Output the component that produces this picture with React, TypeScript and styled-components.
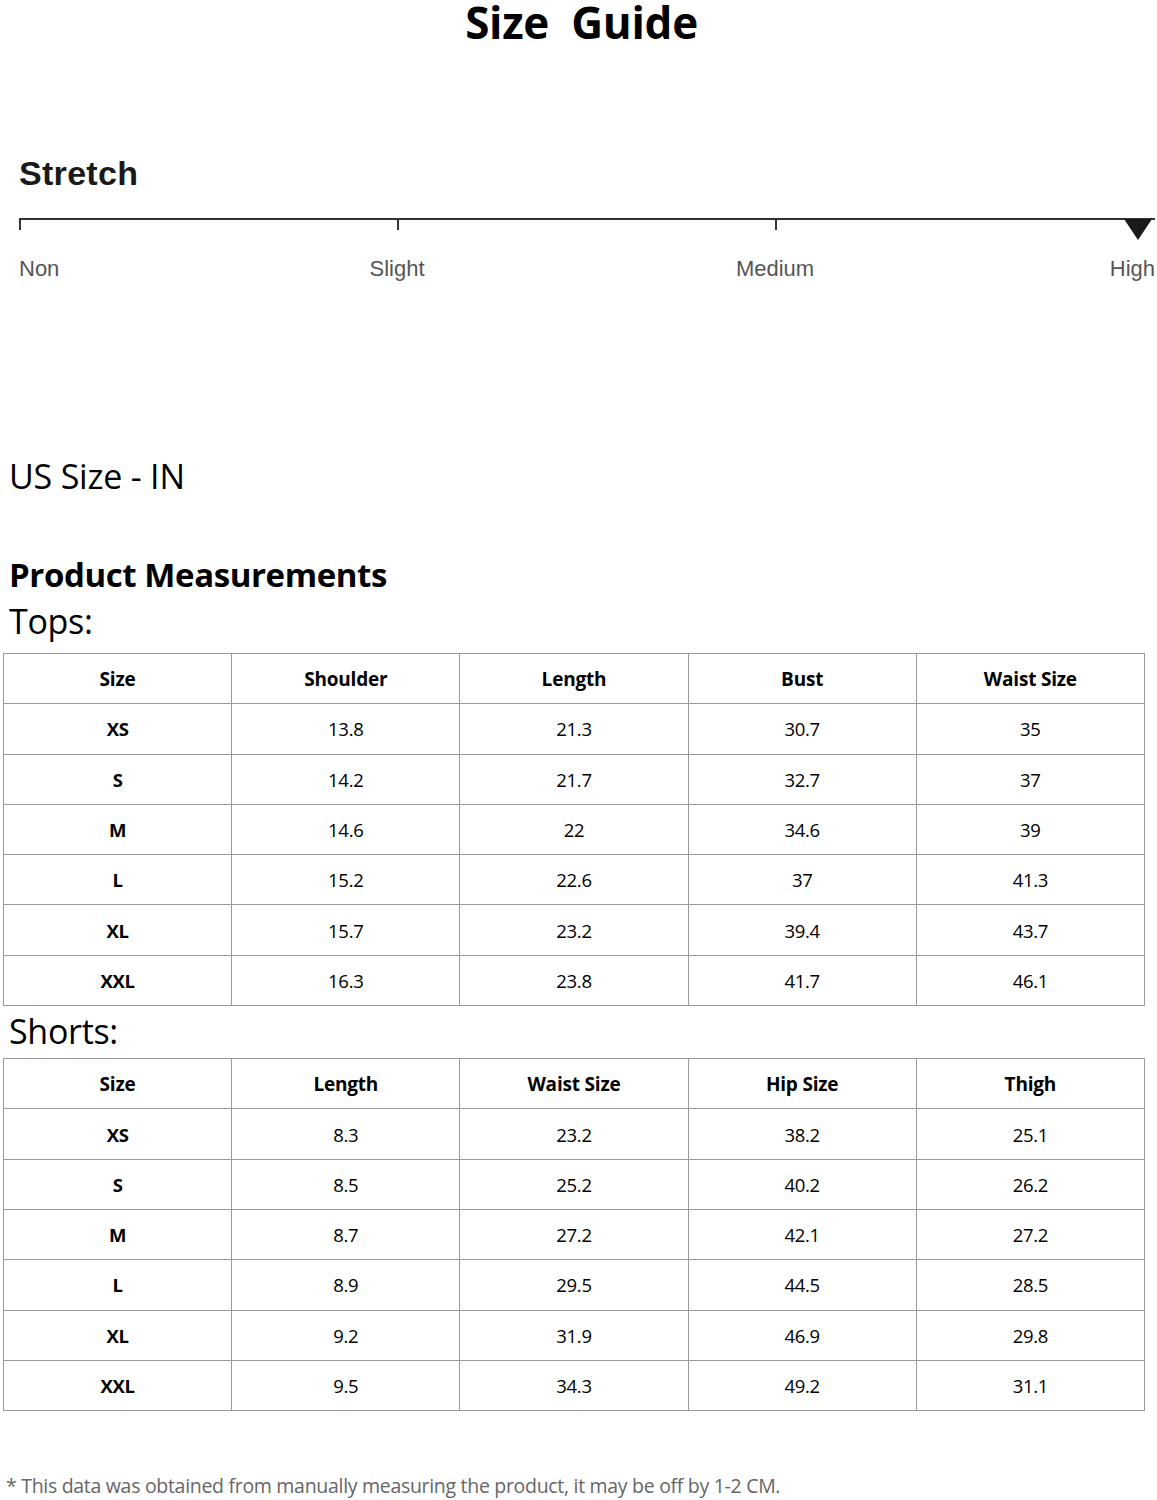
import React from "react";
import styled, { createGlobalStyle } from "styled-components";

const Global = createGlobalStyle`
  html, body { margin: 0; padding: 0; background: #fff; }
  body { font-family: "Open Sans", "Noto Sans", sans-serif; color: #000; }
`;

const Page = styled.div`
  width: 1157px;
  height: 1500px;
  box-sizing: border-box;
  display: flex;
  flex-direction: column;
  overflow: hidden;
`;

const Title = styled.h1`
  margin: 0;
  height: 48px;
  font-family: "Open Sans", sans-serif;
  font-weight: 700;
  font-size: 44px;
  line-height: 44px;
  text-align: center;
  white-space: pre;
  letter-spacing: -0.3px;
  padding-left: 6px;
`;

const StretchBlock = styled.section`
  margin-top: 103px;
  padding-left: 19px;
  padding-right: 2px;
  font-family: "Liberation Sans", Arial, sans-serif;
`;

const StretchTitle = styled.h2`
  margin: 0;
  font-size: 34px;
  font-weight: 700;
  line-height: 44px;
  color: #1a1a1a;
  letter-spacing: 0.3px;
`;

const Scale = styled.div`
  margin-top: 23px;
  display: grid;
  grid-template-columns: 378px 378px 1fr;
  position: relative;
`;

const Segment = styled.div`
  border-top: 2px solid #333;
  display: flex;
  flex-direction: column;
`;

const Tick = styled.div`
  width: 2px;
  height: 10px;
  background: #333;
`;

const Labels = styled.div`
  display: flex;
  justify-content: space-between;
  margin-top: 26px;
`;

const ScaleLabel = styled.span<{ $center?: boolean }>`
  font-size: 22px;
  line-height: 26px;
  color: #555;
  transform: ${(p) => (p.$center ? "translateX(-50%)" : "none")};
`;

const Marker = styled.svg`
  position: absolute;
  right: 2px;
  top: 1px;
`;

const UsSize = styled.div`
  margin-top: 172px;
  padding-left: 9px;
  font-size: 34px;
  line-height: 44px;
  letter-spacing: -0.2px;
`;

const SectionTitle = styled.h3`
  margin: 56px 0 0;
  padding-left: 9px;
  font-size: 33px;
  font-weight: 700;
  line-height: 42px;
  letter-spacing: -0.4px;
`;

const TableLabel = styled.div<{ $h: number }>`
  padding-left: 9px;
  font-size: 34px;
  height: ${(p) => p.$h}px;
  line-height: 50px;
  letter-spacing: -0.3px;
`;

const Table = styled.table`
  margin-left: 3px;
  width: 1142px;
  border-collapse: collapse;
  table-layout: fixed;
`;

const Th = styled.th`
  border: 1px solid #9a9a9a;
  height: 49.3px;
  padding: 0;
  font-size: 19px;
  font-weight: 700;
  text-align: center;
  letter-spacing: -0.2px;
`;

const Td = styled.td<{ $bold?: boolean }>`
  border: 1px solid #9a9a9a;
  height: 49.3px;
  padding: 0;
  font-size: 18.5px;
  font-weight: ${(p) => (p.$bold ? 700 : 400)};
  text-align: center;
  letter-spacing: -0.3px;
`;

const Footnote = styled.div`
  margin-top: 62px;
  padding-left: 6px;
  font-size: 19.5px;
  line-height: 26px;
  color: #666;
  letter-spacing: -0.3px;
`;

type Row = [string, string, string, string, string];

const topsHead: Row = ["Size", "Shoulder", "Length", "Bust", "Waist Size"];
const topsRows: Row[] = [
  ["XS", "13.8", "21.3", "30.7", "35"],
  ["S", "14.2", "21.7", "32.7", "37"],
  ["M", "14.6", "22", "34.6", "39"],
  ["L", "15.2", "22.6", "37", "41.3"],
  ["XL", "15.7", "23.2", "39.4", "43.7"],
  ["XXL", "16.3", "23.8", "41.7", "46.1"],
];

const shortsHead: Row = ["Size", "Length", "Waist Size", "Hip Size", "Thigh"];
const shortsRows: Row[] = [
  ["XS", "8.3", "23.2", "38.2", "25.1"],
  ["S", "8.5", "25.2", "40.2", "26.2"],
  ["M", "8.7", "27.2", "42.1", "27.2"],
  ["L", "8.9", "29.5", "44.5", "28.5"],
  ["XL", "9.2", "31.9", "46.9", "29.8"],
  ["XXL", "9.5", "34.3", "49.2", "31.1"],
];

function SizeTable({ head, rows }: { head: Row; rows: Row[] }) {
  return (
    <Table>
      <thead>
        <tr>
          {head.map((h) => (
            <Th key={h}>{h}</Th>
          ))}
        </tr>
      </thead>
      <tbody>
        {rows.map((r) => (
          <tr key={r[0]}>
            {r.map((c, i) => (
              <Td key={i} $bold={i === 0}>
                {c}
              </Td>
            ))}
          </tr>
        ))}
      </tbody>
    </Table>
  );
}

export default function App() {
  return (
    <Page>
      <Global />
      <Title>{"Size  Guide"}</Title>
      <StretchBlock>
        <StretchTitle>Stretch</StretchTitle>
        <Scale>
          <Segment>
            <Tick />
            <Labels>
              <ScaleLabel>Non</ScaleLabel>
            </Labels>
          </Segment>
          <Segment>
            <Tick />
            <Labels>
              <ScaleLabel $center>Slight</ScaleLabel>
            </Labels>
          </Segment>
          <Segment>
            <Tick />
            <Labels>
              <ScaleLabel $center>Medium</ScaleLabel>
              <ScaleLabel>High</ScaleLabel>
            </Labels>
          </Segment>
          <Marker width="30" height="22" viewBox="0 0 30 22">
            <polygon points="1,0 29,0 15,21" fill="#1a1a1a" />
          </Marker>
        </Scale>
      </StretchBlock>
      <UsSize>US Size - IN</UsSize>
      <SectionTitle>Product Measurements</SectionTitle>
      <TableLabel $h={57}>Tops:</TableLabel>
      <SizeTable head={topsHead} rows={topsRows} />
      <TableLabel $h={52}>Shorts:</TableLabel>
      <SizeTable head={shortsHead} rows={shortsRows} />
      <Footnote>* This data was obtained from manually measuring the product, it may be off by 1-2 CM.</Footnote>
    </Page>
  );
}
